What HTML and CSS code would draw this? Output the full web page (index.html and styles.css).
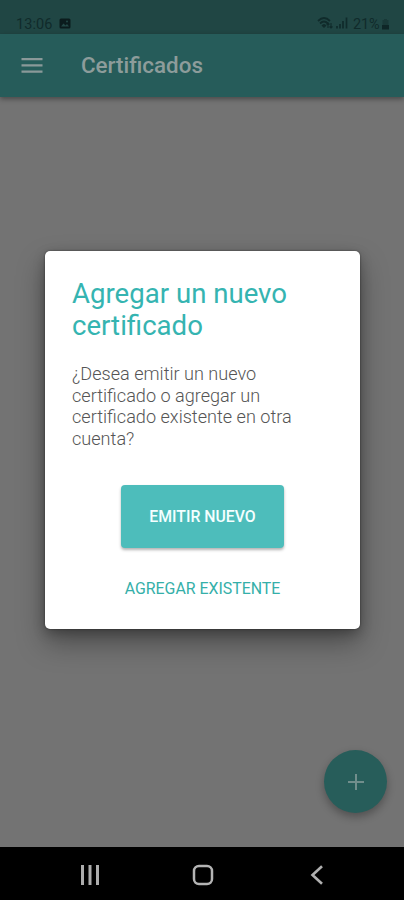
FILE: index.html
```
<!DOCTYPE html>
<html lang="es">
<head>
<meta charset="utf-8">
<title>Certificados</title>
<link rel="stylesheet" href="styles.css">
</head>
<body>
<div class="phone">
  <div class="status">
    <span class="clock">13:06</span>
    <svg class="photo" width="12" height="12" viewBox="0 0 12 12"><rect x="0.5" y="0.5" width="11" height="10" rx="1.500" fill="#0b1c1d"/><path d="M2 8.500l2.500-3 2 2 1.500-1.500L10 8.500z" fill="#234846"/><circle cx="8" cy="3.500" r="1" fill="#234846"/></svg>
    <span class="spacer"></span>
    <svg class="wifi" width="32" height="14" viewBox="0 0 32 14" fill="none" stroke="#102b2b"><path d="M1 5Q7-1 13 5M3 7.500Q7 3.500 11 7.500" stroke-width="1.800"/><path d="M5 9.500Q7 7.500 9 9.500L7 11.500z" fill="#102b2b"/><path d="M11 12V7M9.500 8.500L11 7l1.500 1.500M14 7v5M12.500 10.500L14 12l1.500-1.500" stroke-width="1.100"/><path d="M20 12.500V10M23 12.500V8M26 12.500V5M29.500 12.500V1.500" stroke-width="1.700"/></svg>
    <span class="battery">21%</span>
    <svg class="cell" width="9" height="12" viewBox="0 0 9 12" fill="#0e2627"><path d="M3 1h3v1h1.500v9h-6V2H3z" fill="#193938"/><path d="M1 7h7v4.500H1z"/></svg>
  </div>
  <header class="appbar">
    <svg width="22" height="15" viewBox="0 0 22 15" fill="#8a9999"><path d="M.5 0h21v2.300H.5zM.5 6.200h21v2.300H.5zM.5 12.400h21v2.300H.5z"/></svg>
    <h1>Certificados</h1>
  </header>
  <main class="content">
    <section class="dialog">
      <h2>Agregar un nuevo certificado</h2>
      <p>¿Desea emitir un nuevo certificado o agregar un certificado existente en otra cuenta?</p>
      <button class="primary">EMITIR NUEVO</button>
      <button class="secondary">AGREGAR EXISTENTE</button>
    </section>
    <button class="fab"><svg width="16" height="16" viewBox="0 0 16 16"><path d="M8 0v16M0 8h16" stroke="#718e8c" stroke-width="2"/></svg></button>
  </main>
  <nav class="nav">
    <svg width="20" height="20" viewBox="0 0 20 20"><path d="M2.500 0v20M10 0v20M17.500 0v20" stroke="#adadad" stroke-width="3"/></svg>
    <svg class="home" width="22" height="22" viewBox="0 0 22 22"><rect x="2" y="2" width="18" height="18" rx="5" fill="none" stroke="#b4b4b4" stroke-width="2.500"/></svg>
    <svg width="14" height="20" viewBox="0 0 14 20"><path d="M12 1.200L2.500 10l9.500 8.800" fill="none" stroke="#b0b0b0" stroke-width="2.600"/></svg>
  </nav>
</div>
</body>
</html>
```
FILE: styles.css
```
* { box-sizing: border-box; }
body { margin: 0; font-family: Roboto, "Liberation Sans", sans-serif; }
button { border: 0; padding: 0; font-family: inherit; }
svg { display: block; flex: none; }
.phone { width: 404px; height: 900px; display: flex; flex-direction: column; background: #737373; overflow: hidden; }
.status { height: 34px; flex: none; display: flex; align-items: flex-start; padding: 16px 14px 0 16px; background: #204644; color: #102b2b; }
.clock { font-size: 14.5px; line-height: 17px; width: 38px; letter-spacing: .1px; }
.photo { margin: 2px 0 0 5px; }
.spacer { flex: 1; }
.wifi { margin: 0 4px 0 0; }
.battery { font-size: 14.5px; line-height: 17px; width: 28px; letter-spacing: -.2px; }
.cell { margin-top: 2px; }
.appbar { height: 63px; flex: none; display: flex; align-items: center; gap: 38px; padding: 0 21px; background: #265c5a; box-shadow: 0 2px 5px rgba(0,0,0,.38); }
.appbar h1 { margin: 0; padding-bottom: 2px; font-size: 22.4px; line-height: 28px; font-weight: 500; color: #8d9c9b; }
.content { flex: 1; display: flex; flex-direction: column; padding: 154px 17px 34px 45px; }
.dialog { width: 315px; height: 378px; flex: none; padding: 27px 27px 0; border-radius: 5px; background: #fff; display: flex; flex-direction: column; align-items: center; box-shadow: 0 14px 28px rgba(0,0,0,.34), 0 4px 12px rgba(0,0,0,.25), 0 0 2px rgba(0,0,0,.5); }
.dialog h2 { margin: 0; width: 100%; font-size: 27.6px; line-height: 31.5px; font-weight: 400; color: #35b4b1; }
.dialog p { margin: 22px 0 0; width: 235px; align-self: flex-start; font-size: 18.1px; line-height: 21.5px; font-weight: 300; color: #555; }
.primary { width: 163px; height: 63px; flex: none; margin-top: 36px; border-radius: 4px; background: #4dbdbb; color: #f4ffff; font-size: 15.8px; font-weight: 500; box-shadow: 0 2px 3px rgba(0,0,0,.3); }
.secondary { margin-top: 31px; background: none; font-size: 15.9px; line-height: 20px; color: #35afa9; white-space: nowrap; }
.fab { width: 63px; height: 63px; flex: none; margin-top: auto; align-self: flex-end; border-radius: 50%; background: #275d5a; display: flex; align-items: center; justify-content: center; box-shadow: 0 4px 8px rgba(0,0,0,.3); }
.nav { height: 53px; flex: none; background: #000; display: flex; align-items: center; justify-content: space-between; padding: 3px 80px 0; }
.home { margin-right: 4px; }
```
